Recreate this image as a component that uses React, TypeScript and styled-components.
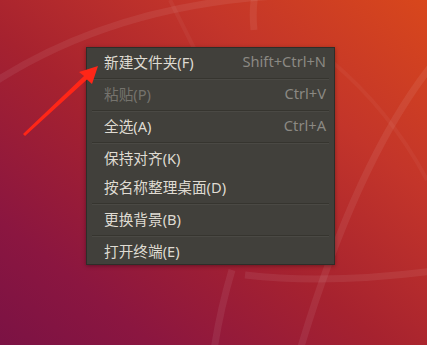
import styled, { createGlobalStyle } from "styled-components";

const GlobalStyle = createGlobalStyle`
  html, body {
    margin: 0;
    padding: 0;
  }
  body {
    font-family: "Noto Sans", "Noto Sans CJK SC", sans-serif;
  }
`;

type Item = {
  label: string;
  shortcut?: string;
  disabled?: boolean;
  separatorAfter?: boolean;
};

const items: Item[] = [
  { label: "新建文件夹(F)", shortcut: "Shift+Ctrl+N", separatorAfter: true },
  { label: "粘贴(P)", shortcut: "Ctrl+V", disabled: true, separatorAfter: true },
  { label: "全选(A)", shortcut: "Ctrl+A", separatorAfter: true },
  { label: "保持对齐(K)" },
  { label: "按名称整理桌面(D)", separatorAfter: true },
  { label: "更换背景(B)", separatorAfter: true },
  { label: "打开终端(E)" },
];

function App() {
  return (
    <>
      <GlobalStyle />
      <Desktop>
        <Wallpaper viewBox="0 0 427 345" preserveAspectRatio="none">
          <g fill="none" stroke="rgba(255,255,255,0.07)" strokeWidth="7">
            <path d="M -10 85 Q 120 0 300 -5" />
            <path d="M 255 -5 Q 252 10 254 30" />
            <path d="M 440 55 Q 360 150 300 350" />
            <path d="M 245 275 Q 330 285 440 270" />
            <path d="M 232 270 Q 220 310 214 350" />
          </g>
          <g fill="none" stroke="rgba(255,255,255,0.04)" strokeWidth="4">
            <path d="M 170 0 Q 185 30 200 60" />
            <path d="M 330 60 Q 390 110 427 180" />
          </g>
        </Wallpaper>

        <Menu>
          {items.map((item) => (
            <div key={item.label}>
              <Row $disabled={item.disabled}>
                <Label>{item.label}</Label>
                {item.shortcut && <Shortcut>{item.shortcut}</Shortcut>}
              </Row>
              {item.separatorAfter && <Separator />}
            </div>
          ))}
        </Menu>

        <Arrow viewBox="0 0 427 345">
          <polygon
            points="23,134 84,76 79,72 98,66 92,84 87,79.5 25,136"
            fill="#ff2617"
          />
        </Arrow>
      </Desktop>
    </>
  );
}

export default App;

const Desktop = styled.div`
  position: relative;
  width: 427px;
  height: 345px;
  overflow: hidden;
  background: linear-gradient(
    to bottom left,
    #d8471c 0%,
    #c3352a 28%,
    #a6222f 55%,
    #8b1640 82%,
    #7b1244 100%
  );
  padding: 47px 0 0 86px;
  box-sizing: border-box;
`;

const Wallpaper = styled.svg`
  position: absolute;
  left: 0;
  top: 0;
  width: 427px;
  height: 345px;
`;

const Arrow = styled.svg`
  position: absolute;
  left: 0;
  top: 0;
  width: 427px;
  height: 345px;
  pointer-events: none;
`;

const Menu = styled.div`
  position: relative;
  width: 249px;
  box-sizing: border-box;
  background: #41403b;
  border: 1px solid #2e2d29;
  padding: 0;
  height: 218px;
  overflow: hidden;
  box-shadow: 0 1px 4px rgba(0, 0, 0, 0.35);
`;

const Row = styled.div<{ $disabled?: boolean }>`
  display: flex;
  align-items: center;
  justify-content: space-between;
  box-sizing: border-box;
  height: 29px;
  padding: 0 8px 3px 17px;
  font-size: 14.67px;
  color: ${(p) => (p.$disabled ? "#75736d" : "#dfdbd2")};
`;

const Label = styled.span`
  white-space: nowrap;
`;

const Shortcut = styled.span`
  color: #8b8983;
  white-space: nowrap;
`;

const Separator = styled.div`
  margin: 1px 5px 0;
  height: 0;
  border-top: 1px solid #36352f;
  border-bottom: 1px solid #4a4944;
`;
